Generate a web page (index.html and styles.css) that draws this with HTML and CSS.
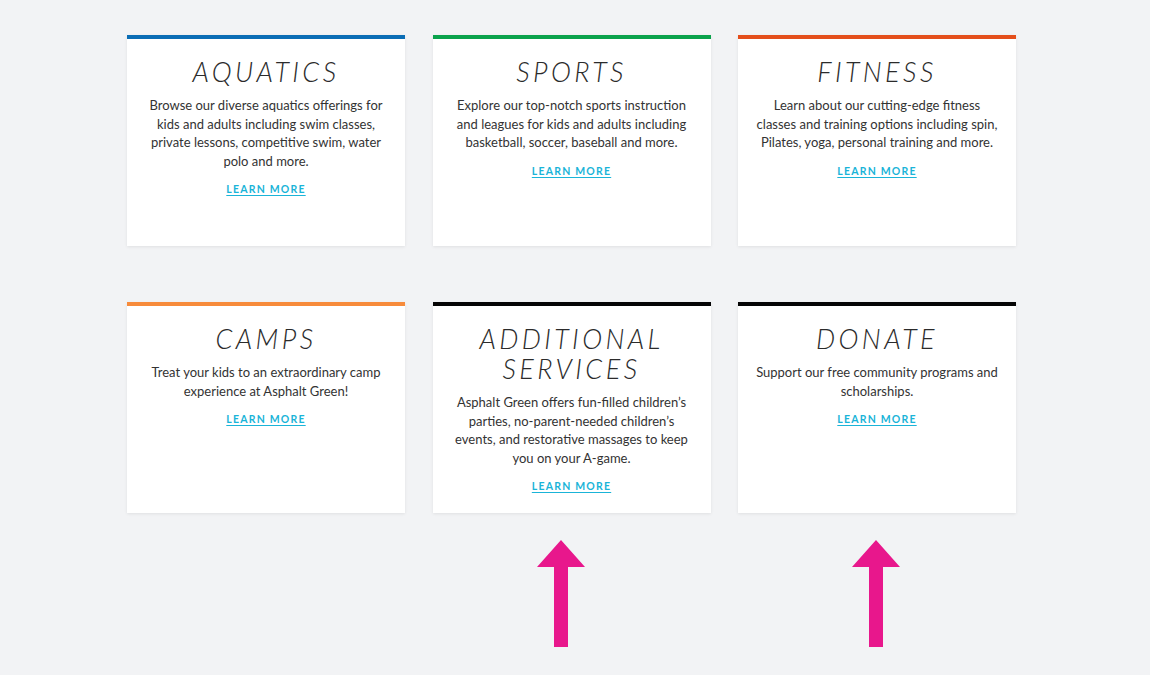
FILE: index.html
```html
<!DOCTYPE html>
<html lang="en">
<head>
<meta charset="utf-8">
<title>Programs</title>
<link rel="stylesheet" href="styles.css">
</head>
<body>
<main class="page">
  <section class="grid">
    <article class="card card--blue">
      <h2 class="card__title">AQUATICS</h2>
      <p class="card__text">Browse our diverse aquatics offerings for kids and adults including swim classes, private lessons, competitive swim, water polo and more.</p>
      <a class="card__link" href="#">LEARN MORE</a>
    </article>
    <article class="card card--green">
      <h2 class="card__title">SPORTS</h2>
      <p class="card__text">Explore our top-notch sports instruction and leagues for kids and adults including basketball, soccer, baseball and more.</p>
      <a class="card__link" href="#">LEARN MORE</a>
    </article>
    <article class="card card--red">
      <h2 class="card__title">FITNESS</h2>
      <p class="card__text">Learn about our cutting-edge fitness classes and training options including spin, Pilates, yoga, personal training and more.</p>
      <a class="card__link" href="#">LEARN MORE</a>
    </article>
    <article class="card card--orange">
      <h2 class="card__title">CAMPS</h2>
      <p class="card__text">Treat your kids to an extraordinary camp experience at Asphalt Green!</p>
      <a class="card__link" href="#">LEARN MORE</a>
    </article>
    <article class="card card--black">
      <h2 class="card__title">ADDITIONAL SERVICES</h2>
      <p class="card__text">Asphalt Green offers fun-filled children’s parties, no-parent-needed children’s events, and restorative massages to keep you on your A-game.</p>
      <a class="card__link" href="#">LEARN MORE</a>
    </article>
    <article class="card card--black">
      <h2 class="card__title">DONATE</h2>
      <p class="card__text">Support our free community programs and scholarships.</p>
      <a class="card__link" href="#">LEARN MORE</a>
    </article>
  </section>
  <svg class="arrow arrow--one" width="50" height="108" viewBox="0 0 50 108" aria-hidden="true">
    <polygon points="25,0 49,27 32,27 32,107 18,107 18,27 1,27" fill="#e8178c"/>
  </svg>
  <svg class="arrow arrow--two" width="50" height="108" viewBox="0 0 50 108" aria-hidden="true">
    <polygon points="25,0 49,27 32,27 32,107 18,107 18,27 1,27" fill="#e8178c"/>
  </svg>
</main>
</body>
</html>
```

FILE: styles.css
```css
html, body {
  margin: 0;
  padding: 0;
  background: #f2f3f5;
}
body {
  font-family: Lato, "Open Sans", Arial, sans-serif;
  color: #333;
  width: 1150px;
  height: 675px;
  overflow: hidden;
}
.page {
  position: relative;
  height: 675px;
}
.grid {
  display: grid;
  grid-template-columns: repeat(3, 278px);
  column-gap: 27.5px;
  row-gap: 56px;
  padding: 35px 0 0 127px;
}
.card {
  background: #fff;
  border-top: 4px solid #000;
  min-height: 211px;
  box-sizing: border-box;
  padding: 18px 16px 20px;
  text-align: center;
  box-shadow: 0 1px 3px rgba(0,0,0,0.08);
  display: flex;
  flex-direction: column;
  align-items: center;
}
.card--blue { border-top-color: #0b6db5; }
.card--green { border-top-color: #0ba24c; }
.card--red { border-top-color: #e44e1b; }
.card--orange { border-top-color: #f78b3b; }
.card--black { border-top-color: #050505; }
.card__title {
  margin: 0 0 9px;
  font-size: 27px;
  line-height: 30px;
  font-style: italic;
  font-weight: 300;
  letter-spacing: 3.4px;
  color: #2b2b2b;
  padding: 0 24px;
}
.card__text {
  margin: 0;
  font-size: 13px;
  line-height: 18.5px;
  color: #333;
}
.card__link {
  margin-top: 12px;
  font-size: 10.5px;
  line-height: 14px;
  font-weight: 700;
  letter-spacing: 1.2px;
  color: #1ab4d8;
  text-decoration: underline;
  text-underline-offset: 2px;
}
.arrow {
  position: absolute;
  top: 540px;
}
.arrow--one { left: 536px; }
.arrow--two { left: 851px; }
```
